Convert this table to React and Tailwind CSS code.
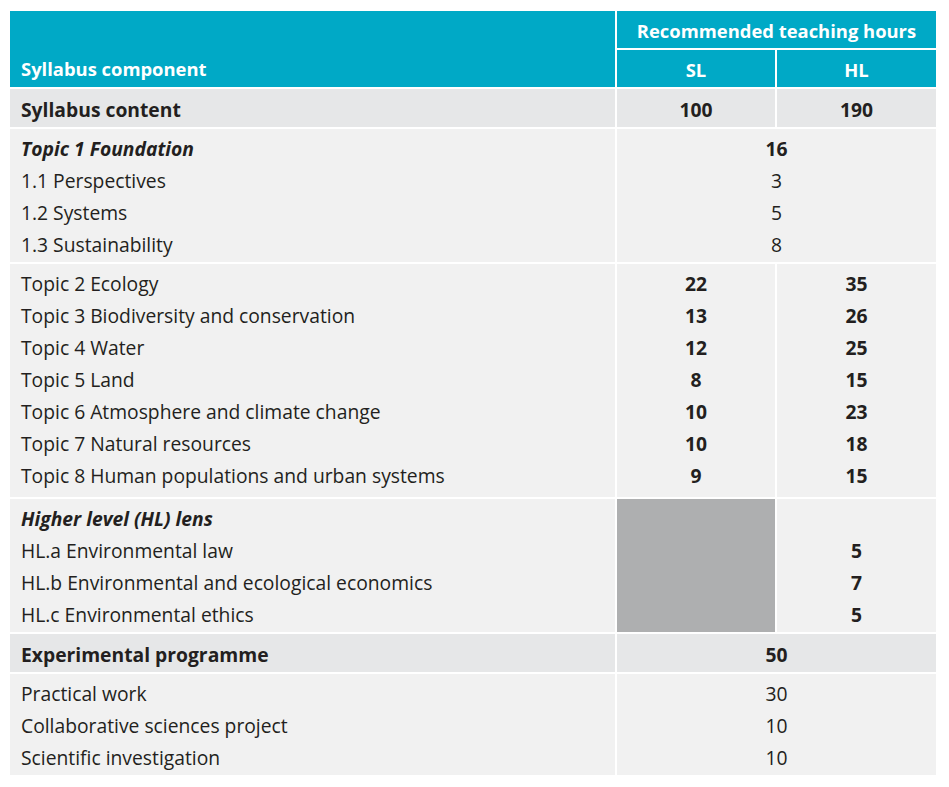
import React from 'react';

const font = { fontFamily: '"Open Sans", "Noto Sans", sans-serif' };

const topic1 = [
  { label: 'Topic 1 Foundation', italic: true, merged: '16', mergedBold: true },
  { label: '1.1 Perspectives', merged: '3' },
  { label: '1.2 Systems', merged: '5' },
  { label: '1.3 Sustainability', merged: '8' },
];

const topics = [
  ['Topic 2 Ecology', '22', '35'],
  ['Topic 3 Biodiversity and conservation', '13', '26'],
  ['Topic 4 Water', '12', '25'],
  ['Topic 5 Land', '8', '15'],
  ['Topic 6 Atmosphere and climate change', '10', '23'],
  ['Topic 7 Natural resources', '10', '18'],
  ['Topic 8 Human populations and urban systems', '9', '15'],
];

const hlLens = [
  ['Higher level (HL) lens', ''],
  ['HL.a Environmental law', '5'],
  ['HL.b Environmental and ecological economics', '7'],
  ['HL.c Environmental ethics', '5'],
];

const practical = [
  ['Practical work', '30'],
  ['Collaborative sciences project', '10'],
  ['Scientific investigation', '10'],
];

const Line = ({ children, className = '' }) => (
  <div className={`h-[32px] leading-[32px] ${className}`}>{children}</div>
);

export default function App() {
  return (
    <div className="min-h-screen bg-white pt-[11px] pl-[10px] text-[#231f20]" style={font}>
      <div className="grid w-[926px] grid-cols-[605px_158px_159px] grid-rows-[37px_37px_38px_133px_233px_133px_38px_101px] gap-[2px] bg-white text-[19.3px]">
        {/* header */}
        <div className="row-span-2 flex items-end bg-[#00a9c6] px-[11px] pb-[4px] text-[18.4px] font-bold text-white">
          Syllabus component
        </div>
        <div className="col-span-2 flex items-center justify-center bg-[#00a9c6] pt-[2px] text-[18.4px] font-bold text-white">
          Recommended teaching hours
        </div>
        <div className="flex items-center justify-center bg-[#00a9c6] pt-[2px] text-[18.4px] font-bold text-white">SL</div>
        <div className="flex items-center justify-center bg-[#00a9c6] pt-[2px] text-[18.4px] font-bold text-white">HL</div>

        {/* syllabus content */}
        <div className="flex items-center bg-[#e6e7e8] px-[11px] pt-[4px] font-bold">Syllabus content</div>
        <div className="flex items-center justify-center bg-[#e6e7e8] pt-[4px] font-bold">100</div>
        <div className="flex items-center justify-center bg-[#e6e7e8] pt-[4px] font-bold">190</div>

        {/* topic 1 */}
        <div className="bg-[#f1f1f1] px-[11px] pt-[4px]">
          {topic1.map((r) => (
            <Line key={r.label} className={r.italic ? 'font-bold italic' : ''}>{r.label}</Line>
          ))}
        </div>
        <div className="col-span-2 bg-[#f1f1f1] pt-[4px] text-center">
          {topic1.map((r) => (
            <Line key={r.label} className={r.mergedBold ? 'font-bold' : ''}>{r.merged}</Line>
          ))}
        </div>

        {/* topics 2-8 */}
        <div className="bg-[#f1f1f1] px-[11px] pt-[4px]">
          {topics.map((t) => (
            <Line key={t[0]}>{t[0]}</Line>
          ))}
        </div>
        <div className="bg-[#f1f1f1] pt-[4px] text-center font-bold">
          {topics.map((t) => (
            <Line key={t[0]}>{t[1]}</Line>
          ))}
        </div>
        <div className="bg-[#f1f1f1] pt-[4px] text-center font-bold">
          {topics.map((t) => (
            <Line key={t[0]}>{t[2]}</Line>
          ))}
        </div>

        {/* HL lens */}
        <div className="bg-[#f1f1f1] px-[11px] pt-[4px]">
          {hlLens.map((t, i) => (
            <Line key={t[0]} className={i === 0 ? 'font-bold italic' : ''}>{t[0]}</Line>
          ))}
        </div>
        <div className="bg-[#aeafb0]" />
        <div className="bg-[#f1f1f1] pt-[4px] text-center font-bold">
          {hlLens.map((t) => (
            <Line key={t[0]}>{t[1]}</Line>
          ))}
        </div>

        {/* experimental programme */}
        <div className="flex items-center bg-[#e6e7e8] px-[11px] pt-[4px] font-bold">Experimental programme</div>
        <div className="col-span-2 flex items-center justify-center bg-[#e6e7e8] pt-[4px] font-bold">50</div>

        <div className="bg-[#f1f1f1] px-[11px] pt-[4px]">
          {practical.map((t) => (
            <Line key={t[0]}>{t[0]}</Line>
          ))}
        </div>
        <div className="col-span-2 bg-[#f1f1f1] pt-[4px] text-center">
          {practical.map((t) => (
            <Line key={t[0]}>{t[1]}</Line>
          ))}
        </div>
      </div>
    </div>
  );
}
